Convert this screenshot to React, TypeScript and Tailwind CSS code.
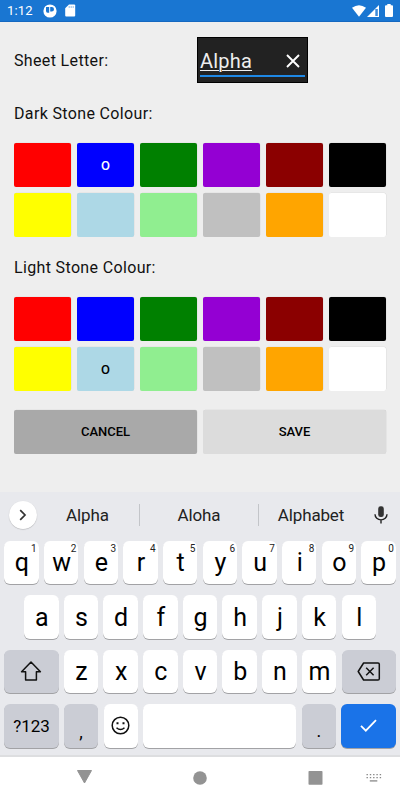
import { ReactNode } from 'react';
import { clsx } from 'clsx';

const COLOURS = [
  { name: 'red', bg: 'bg-[#ff0000]' },
  { name: 'blue', bg: 'bg-[#0000ff]' },
  { name: 'green', bg: 'bg-[#008000]' },
  { name: 'violet', bg: 'bg-[#9400d3]' },
  { name: 'maroon', bg: 'bg-[#8b0000]' },
  { name: 'black', bg: 'bg-black' },
  { name: 'yellow', bg: 'bg-[#ffff00]' },
  { name: 'lightblue', bg: 'bg-[#add8e6]' },
  { name: 'lightgreen', bg: 'bg-[#90ee90]' },
  { name: 'silver', bg: 'bg-[#c0c0c0]' },
  { name: 'orange', bg: 'bg-[#ffa500]' },
  { name: 'white', bg: 'bg-white' },
];

const DARK = ['blue', 'green', 'violet', 'maroon', 'red', 'black'];

const RAISED = 'rounded-[2px] shadow-[0.3px_-0.3px_0.5px_rgba(0,0,0,0.12)]';

function StatusBar() {
  return (
    <header className="flex h-[22px] items-center border-b border-[#1568c0] bg-[#1976d2] px-[7px] text-white">
      <span className="w-[36px] text-[13px] leading-none tracking-[0.2px]">1:12</span>
      <svg className="h-[14px] w-[14px]" viewBox="0 0 14 14">
        <circle cx="7" cy="7" r="6.6" fill="white" />
        <path d="M3 3h3.2v5.8H4.6Q3 8.6 3 6.8z" fill="#1976d2" />
        <path d="M7.2 3h1.6a2.2 2.2 0 0 1 0 4.4H7.2z" fill="#1976d2" />
      </svg>
      <svg className="ml-[8px] h-[13px] w-[11px]" viewBox="0 0 11 13">
        <path d="M4 .5h5.2q1 0 1 1v10q0 1-1 1H1.2q-1 0-1-1V4.3z" fill="white" />
        <path d="M4.2 2v2M6.2 2v2M8.2 2v2" stroke="#75aee6" strokeWidth="0.8" />
      </svg>
      <div className="ml-auto flex items-center">
        <svg className="h-[12px] w-[14px]" viewBox="0 0 14 12">
          <path d="M0 2.8Q7-2.4 14 2.8L7 11.7z" fill="white" />
        </svg>
        <svg className="ml-[1px] h-[12px] w-[12px]" viewBox="0 0 12 12">
          <path d="M12 0v12H0z" fill="white" />
          <path d="M8.3 4h2.5v7H8.3z" fill="#3d8bdb" />
        </svg>
        <svg className="ml-[6px] h-[13px] w-[8px]" viewBox="0 0 8 13">
          <path d="M2.3 0h3.4v1.3H7q1 0 1 1V12q0 1-1 1H1q-1 0-1-1V2.3q0-1 1-1h1.3z" fill="white" />
        </svg>
      </div>
    </header>
  );
}

function SwatchGrid({ selected }: { selected: string }) {
  return (
    <div className="grid grid-cols-6 gap-[6px]">
      {COLOURS.map((colour) => (
        <button
          key={colour.name}
          className={clsx(
            'h-[44px] text-[13px] font-medium leading-none',
            RAISED,
            colour.bg,
            DARK.includes(colour.name) ? 'text-white' : 'text-black',
          )}
        >
          {colour.name === selected ? 'O' : ''}
        </button>
      ))}
    </div>
  );
}

type KeyProps = {
  children?: ReactNode;
  hint?: string;
  className?: string;
};

function Key({ children, hint, className = 'w-[34.5px] bg-white pl-px text-[25px]' }: KeyProps) {
  return (
    <button
      className={clsx(
        'relative flex h-[43.4px] shrink-0 items-center justify-center rounded-[6px] leading-none text-black shadow-[0_1px_0.5px_rgba(0,0,0,0.3)]',
        className,
      )}
    >
      {children}
      {hint && <span className="absolute right-[2px] top-[3px] text-[10px] leading-none text-[#222]">{hint}</span>}
    </button>
  );
}

function Keyboard() {
  return (
    <section className="flex h-[265px] flex-col border-b-2 border-[#dddee0] bg-[#e8e9ed]">
      <div className="flex h-[49px] items-center pb-[3px] text-[17px] text-[#222]">
        <button className="ml-[9px] flex h-[28px] w-[28px] shrink-0 items-center justify-center rounded-full bg-white shadow-[0_0.5px_1px_rgba(0,0,0,0.25)]">
          <svg className="h-[12px] w-[8px]" viewBox="0 0 8 12" fill="none" stroke="#333" strokeWidth="1.7">
            <path d="M1.2 1.2 6 6 1.2 10.8" />
          </svg>
        </button>
        <span className="w-[102px] pr-px pt-[2px] text-center tracking-[-0.1px]">Alpha</span>
        <span className="h-[22px] w-px bg-[#c3c5c9]" />
        <span className="w-[118px] pt-[2px] text-center tracking-[-0.1px]">Aloha</span>
        <span className="h-[22px] w-px bg-[#c3c5c9]" />
        <span className="w-[104px] pt-[2px] text-center tracking-[-0.15px]">Alphabet</span>
        <svg className="ml-[11px] h-[18px] w-[14px]" viewBox="0 0 14 18" fill="none" stroke="#222" strokeWidth="1.4">
          <rect x="4.2" y="0.3" width="5.6" height="10.8" rx="2.4" fill="#333" stroke="none" />
          <path d="M1 8.3a6 5.6 0 0 0 12 0M7 14v3.5" />
        </svg>
      </div>
      <div className="flex flex-col gap-[11px]">
        <div className="flex justify-center gap-[5.2px]">
          {'qwertyuiop'.split('').map((letter, i) => (
            <Key key={letter} hint={String((i + 1) % 10)}>
              {letter}
            </Key>
          ))}
        </div>
        <div className="flex justify-center gap-[5.2px]">
          {'asdfghjkl'.split('').map((letter) => (
            <Key key={letter}>{letter}</Key>
          ))}
        </div>
        <div className="flex justify-center gap-[5.2px]">
          <Key className="w-[54.2px] bg-[#cbcdd5]">
            <svg className="h-[20px] w-[22px]" viewBox="0 0 22 20" fill="none" stroke="#111" strokeWidth="1.5">
              <path d="M11 1 1.6 10.8h4v8.2h10.8v-8.2h4z" strokeLinejoin="round" />
            </svg>
          </Key>
          {'zxcvbnm'.split('').map((letter) => (
            <Key key={letter}>{letter}</Key>
          ))}
          <Key className="w-[54.2px] bg-[#cbcdd5]">
            <svg className="h-[19px] w-[24px]" viewBox="0 0 24 19" fill="none" stroke="#111" strokeWidth="1.5">
              <path d="M6.6 1H21q1.3 0 1.3 1.3v14.4q0 1.3-1.3 1.3H6.6L1.2 9.5z" strokeLinejoin="round" />
              <path d="m9.2 5.8 7.4 7.4m0-7.4-7.4 7.4" />
            </svg>
          </Key>
        </div>
        <div className="flex justify-center gap-[5.2px]">
          <Key className="w-[54.2px] bg-[#cbcdd5] pt-px text-[17px]">?123</Key>
          <Key className="w-[34.5px] bg-[#cbcdd5] pt-[12px] text-[18px]">,</Key>
          <Key className="w-[34.5px] bg-white">
            <svg className="h-[19px] w-[19px]" viewBox="0 0 19 19" fill="none" stroke="#111" strokeWidth="1.5">
              <circle cx="9.5" cy="9.5" r="8.3" />
              <path d="M5.5 11.7q4 3.6 8 0" />
              <path d="M5.5 7.2h2M11.5 7.2h2" strokeWidth="2" />
            </svg>
          </Key>
          <Key className="w-[153.3px] bg-white" />
          <Key className="w-[34.5px] bg-[#cbcdd5] pt-[10px] text-[18px]">.</Key>
          <Key className="w-[54.2px] bg-[#1a73e8]">
            <svg className="h-[13px] w-[17px]" viewBox="0 0 17 13" fill="none" stroke="white" strokeWidth="1.8">
              <path d="m1 6.8 4.8 4.8L16 1.2" />
            </svg>
          </Key>
        </div>
      </div>
    </section>
  );
}

function NavigationBar() {
  return (
    <footer className="flex h-[43px] bg-white">
      <svg className="h-[43px] w-full" viewBox="0 0 400 43" fill="#939393">
        <path d="M77.5 13.5h14l-7 12.5z" stroke="#939393" strokeLinejoin="round" />
        <circle cx="200" cy="21" r="6.8" />
        <rect x="308.5" y="14" width="14" height="13.7" rx="0.8" />
        <g stroke="#888" strokeWidth="1.3">
          <path d="M366.5 17.6h15M366.5 20.6h15" strokeDasharray="1.4 1.9" />
          <path d="M369.8 23.9h7.5" />
        </g>
      </svg>
    </footer>
  );
}

export default function App() {
  return (
    <div className="flex h-[800px] w-[400px] flex-col overflow-hidden bg-[#eeeeee] font-['Roboto',sans-serif] text-black">
      <StatusBar />
      <main className="flex flex-1 flex-col px-[14px] pt-[15px]">
        <div className="flex h-[46px] items-center">
          <label className="w-[183px] pt-[2px] text-[16px] tracking-[0.35px] text-[#111]">Sheet Letter:</label>
          <div className="flex h-[46px] w-[111px] flex-col border border-black bg-[#222222] px-[2px] pt-[8px]">
            <div className="flex h-[31px] items-center justify-between border-b-2 border-[#1e88e5] pr-[5px] text-white">
              <span className="text-[20px] leading-none tracking-[0.2px] text-[#eee] underline decoration-1 underline-offset-2">
                Alpha
              </span>
              <svg className="h-[14px] w-[14px]" viewBox="0 0 14 14" stroke="white" strokeWidth="1.9">
                <path d="m1 1 12 12m0-12L1 13" />
              </svg>
            </div>
          </div>
        </div>
        <h2 className="mt-[19px] h-[41px] text-[16px] leading-[24px] tracking-[0.35px] text-[#111]">Dark Stone Colour:</h2>
        <SwatchGrid selected="blue" />
        <h2 className="mt-[19px] h-[41px] text-[16px] leading-[24px] tracking-[0.35px] text-[#111]">Light Stone Colour:</h2>
        <SwatchGrid selected="lightblue" />
        <div className="mt-[19px] grid grid-cols-2 gap-[6px] text-[13px] font-medium">
          <button className={clsx('h-[44px] bg-[#a9a9a9]', RAISED)}>CANCEL</button>
          <button className={clsx('h-[44px] bg-[#dcdcdc]', RAISED)}>SAVE</button>
        </div>
      </main>
      <Keyboard />
      <NavigationBar />
    </div>
  );
}
